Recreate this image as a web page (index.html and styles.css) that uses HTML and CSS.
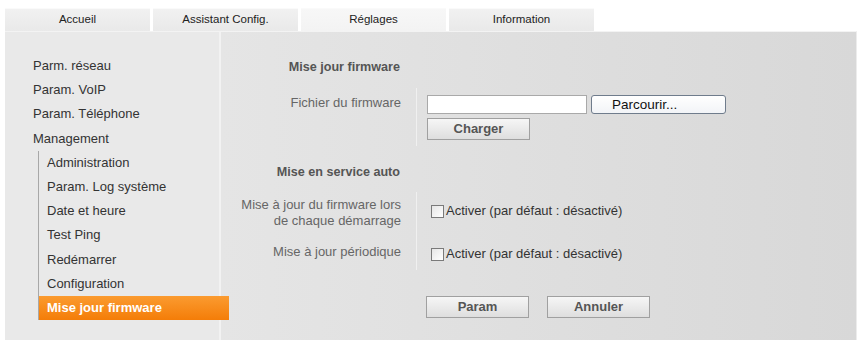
FILE: index.html
```html
<!DOCTYPE html>
<html lang="fr">
<head>
<meta charset="utf-8">
<title>Réglages</title>
<link rel="stylesheet" href="styles.css">
</head>
<body>
<div class="tabs">
  <div class="tab">Accueil</div>
  <div class="tab">Assistant Config.</div>
  <div class="tab active">Réglages</div>
  <div class="tab">Information</div>
</div>
<div class="panel">
  <nav class="side">
    <ul class="menu">
      <li>Parm. réseau</li>
      <li>Param. VoIP</li>
      <li>Param. Téléphone</li>
      <li>Management</li>
    </ul>
    <ul class="sub">
      <li>Administration</li>
      <li>Param. Log système</li>
      <li>Date et heure</li>
      <li>Test Ping</li>
      <li>Redémarrer</li>
      <li>Configuration</li>
      <li class="current">Mise jour firmware</li>
    </ul>
  </nav>
  <main class="content">
    <div class="head">Mise jour firmware</div>
    <div class="group g1">
      <div class="row">
        <div class="label l1">Fichier du firmware</div>
        <div class="ctrl">
          <div class="fileline">
            <span class="input"></span>
            <span class="browse">Parcourir...</span>
          </div>
          <span class="btn">Charger</span>
        </div>
      </div>
    </div>
    <div class="head h2">Mise en service auto</div>
    <div class="group g2">
      <div class="row r1">
        <div class="label">Mise à jour du firmware lors<br>de chaque démarrage</div>
        <div class="ctrl"><label class="check"><span class="box"></span>Activer (par défaut : désactivé)</label></div>
      </div>
      <div class="row r2">
        <div class="label">Mise à jour périodique</div>
        <div class="ctrl"><label class="check"><span class="box"></span>Activer (par défaut : désactivé)</label></div>
      </div>
    </div>
    <div class="actions">
      <span class="btn">Param</span>
      <span class="btn">Annuler</span>
    </div>
  </main>
</div>
</body>
</html>
```
FILE: styles.css
```css
* { box-sizing: border-box; }
html, body { margin: 0; padding: 0; background: #fff; }
body {
  font-family: "Liberation Sans", Arial, sans-serif;
  font-size: 13px;
  color: #333;
}
.tabs {
  display: flex;
  gap: 3px;
  padding: 8px 0 0 5px;
  height: 31px;
}
.tab {
  width: 145px;
  height: 23px;
  background: linear-gradient(#f1f1f1, #e9e9e9);
  border-top: 1px solid #fafafa;
  text-align: center;
  line-height: 21px;
  font-size: 11.5px;
  color: #222;
}
.tab.active {
  background: linear-gradient(#f7f7f7, #f3f3f3);
}
.panel {
  margin-left: 5px;
  width: 852px;
  height: 309px;
  display: flex;
  border-top: 1px solid #f3f3f3;
  border-right: 1px solid #ececec;
  background: #e8e8e8;
}
.side {
  width: 216px;
  flex: none;
  background: #e9e9e9;
  border-right: 2px solid #f2f2f2;
  padding-top: 22px;
  position: relative;
  z-index: 1;
}
.menu, .sub { list-style: none; margin: 0; padding: 0; }
.menu li, .sub li {
  height: 24.2px;
  line-height: 24px;
  font-size: 13px;
  color: #333;
}
.menu li { padding-left: 28px; }
.sub {
  margin-left: 33px;
  border-left: 1px solid #a8a8a8;
}
.sub li { padding-left: 8px; }
.sub li.current {
  margin-right: -10px;
  background: linear-gradient(#fb9b30, #f47d08);
  color: #fff;
  font-weight: bold;
}
.content {
  flex: 1;
  background: linear-gradient(90deg, #e5e5e5, #d8d8d8);
  padding-top: 27px;
}
.head {
  width: 179px;
  text-align: right;
  font-weight: bold;
  font-size: 12.6px;
  color: #555;
  line-height: 16px;
}
.h2 { margin-top: 18px; }
.group {
  margin-left: 195px;
  border-left: 1px solid #f0f0f0;
}
.g1 { margin-top: 13px; height: 58px; }
.g2 { margin-top: 12px; height: 78px; }
.row {
  display: flex;
  margin-left: -195px;
}
.label {
  width: 195px;
  padding-right: 16px;
  text-align: right;
  color: #666;
  line-height: 16px;
  flex: none;
}
.l1 { padding-top: 7px; }
.ctrl { padding-left: 10px; }
.g1 .ctrl { padding-top: 7px; }
.fileline { display: flex; gap: 4px; height: 19px; }
.input {
  width: 160px;
  height: 19px;
  background: #fff;
  border: 1px solid #a9a9a9;
}
.browse {
  width: 135px;
  height: 19px;
  border: 1px solid #6f7c8c;
  border-radius: 3px;
  background: linear-gradient(#ffffff, #f2f4f7);
  color: #111;
  font-size: 13.5px;
  line-height: 17px;
  padding-left: 20px;
}
.btn {
  display: inline-block;
  width: 103px;
  height: 22px;
  border: 1px solid #a0a0a0;
  background: linear-gradient(#f6f6f6, #dedede);
  text-align: center;
  line-height: 20px;
  font-weight: bold;
  color: #555;
}
.g1 .btn { margin-top: 4px; }
.r1 { padding-top: 5px; }
.r1 .ctrl { padding-top: 6px; }
.r2 { padding-top: 15px; }
.r2 .ctrl { padding-top: 2px; }
.check {
  display: flex;
  align-items: center;
  gap: 2px;
  color: #333;
  line-height: 16px;
  padding-left: 4px;
}
.box {
  width: 13px;
  height: 13px;
  border: 1px solid #7a7a7a;
  background: linear-gradient(135deg, #e6e6e6, #ffffff);
  flex: none;
}
.actions {
  margin-top: 26px;
  margin-left: 205px;
  display: flex;
  gap: 18px;
}
```
